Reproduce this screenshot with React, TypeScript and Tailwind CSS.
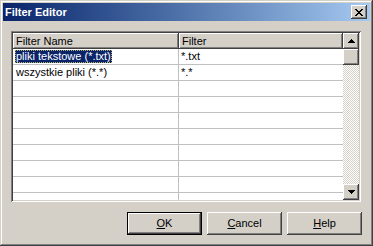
import React from "react";

const raised =
  "shadow-[inset_-1px_-1px_#404040,inset_1px_1px_#ffffff,inset_-2px_-2px_#808080,inset_2px_2px_#d4d0c8]";

function Arrow({ up }: { up?: boolean }) {
  return (
    <svg width="7" height="4" viewBox="0 0 7 4" className="block">
      {up ? (
        <path d="M3 0h1v1h1v1h1v1h1v1H0V3h1V2h1V1h1z" fill="#000" />
      ) : (
        <path d="M0 0h7v1H6v1H5v1H4v1H3V3H2V2H1V1H0z" fill="#000" />
      )}
    </svg>
  );
}

function Btn({ label, u, def }: { label: string; u: number; def?: boolean }) {
  const inner = (
    <div
      className={`flex-1 flex items-center justify-center bg-[#d4d0c8] ${raised}`}
    >
      <span className="leading-[13px]">
        {label.slice(0, u)}
        <span className="underline underline-offset-[1px]">{label[u]}</span>
        {label.slice(u + 1)}
      </span>
    </div>
  );
  return def ? (
    <div className="w-[75px] h-[23px] flex border border-black">{inner}</div>
  ) : (
    <div className="w-[75px] h-[23px] flex">{inner}</div>
  );
}

export default function App() {
  const rows: [string, string][] = [
    ["pliki tekstowe (*.txt)", "*.txt"],
    ["wszystkie pliki (*.*)", "*.*"],
    ["", ""],
    ["", ""],
    ["", ""],
    ["", ""],
    ["", ""],
    ["", ""],
    ["", ""],
    ["", ""],
  ];
  return (
    <div
      className="w-[373px] h-[246px] bg-[#d4d0c8] p-[3px] flex flex-col text-[11px] text-black shadow-[inset_-1px_-1px_#404040,inset_1px_1px_#d4d0c8,inset_-2px_-2px_#808080,inset_2px_2px_#ffffff]"
      style={{ fontFamily: '"Liberation Sans", Arial, sans-serif' }}
    >
      {/* Title bar */}
      <div className="h-[18px] flex items-center bg-gradient-to-r from-[#0a246a] to-[#a6caf0] pl-[2px] pr-[3px]">
        <span className="flex-1 text-white font-bold leading-[14px]">Filter Editor</span>
        <div className={`w-[16px] h-[14px] bg-[#d4d0c8] flex items-center justify-center ${raised}`}>
          <svg width="8" height="7" viewBox="0 0 8 7" className="block">
            <path
              d="M0 0h2v1h1v1h2V1h1V0h2v1H7v1H6v1H5v1h1v1h1v1h1v1H6V6H5V5H3v1H2v1H0V6h1V5h1V4h1V3H2V2H1V1H0z"
              fill="#000"
            />
          </svg>
        </div>
      </div>

      {/* Body */}
      <div className="flex-1 flex flex-col pt-[10px] pl-[8px] pr-[8px] pb-[8px]">
        <div className="w-[350px] h-[171px] p-[2px] bg-white flex shadow-[inset_1px_1px_#808080,inset_-1px_-1px_#ffffff,inset_2px_2px_#404040,inset_-2px_-2px_#d4d0c8]">
          <div className="w-[330px] flex flex-col overflow-hidden">
            <div className="h-[16px] flex shrink-0">
              <div className={`w-[166px] bg-[#d4d0c8] pl-[3px] flex items-center ${raised}`}>
                <span className="leading-[13px]">Filter Name</span>
              </div>
              <div className={`flex-1 bg-[#d4d0c8] pl-[3px] flex items-center ${raised}`}>
                <span className="leading-[13px]">Filter</span>
              </div>
            </div>
            {rows.map((r, i) => (
              <div key={i} className="h-[16px] shrink-0 flex border-b border-[#c0c0c0]">
                <div className="w-[166px] border-r border-[#c0c0c0] flex items-center">
                  {i === 0 ? (
                    <span className="ml-[2px] px-[1px] h-[13px] leading-[13px] bg-[#0a246a] text-white outline-1 outline-dotted outline-[#b8b070] -outline-offset-1">
                      {r[0]}
                    </span>
                  ) : (
                    <span className="pl-[3px] leading-[13px]">{r[0]}</span>
                  )}
                </div>
                <div className="flex-1 pl-[2px] flex items-center">
                  <span className="leading-[13px]">{r[1]}</span>
                </div>
              </div>
            ))}
          </div>
          {/* Scrollbar */}
          <div className="w-[16px] flex flex-col">
            <div className={`h-[16px] bg-[#d4d0c8] flex items-center justify-center ${raised}`}>
              <Arrow up />
            </div>
            <div className={`h-[16px] bg-[#d4d0c8] ${raised}`} />
            <div className="flex-1 bg-[repeating-conic-gradient(#ffffff_0_25%,#d4d0c8_0_50%)] bg-[length:2px_2px]" />
            <div className={`h-[16px] bg-[#d4d0c8] flex items-center justify-center ${raised}`}>
              <Arrow />
            </div>
          </div>
        </div>

        <div className="flex-1 flex items-end justify-end gap-[5px]">
          <Btn label="OK" u={0} def />
          <Btn label="Cancel" u={0} />
          <Btn label="Help" u={0} />
        </div>
      </div>
    </div>
  );
}
